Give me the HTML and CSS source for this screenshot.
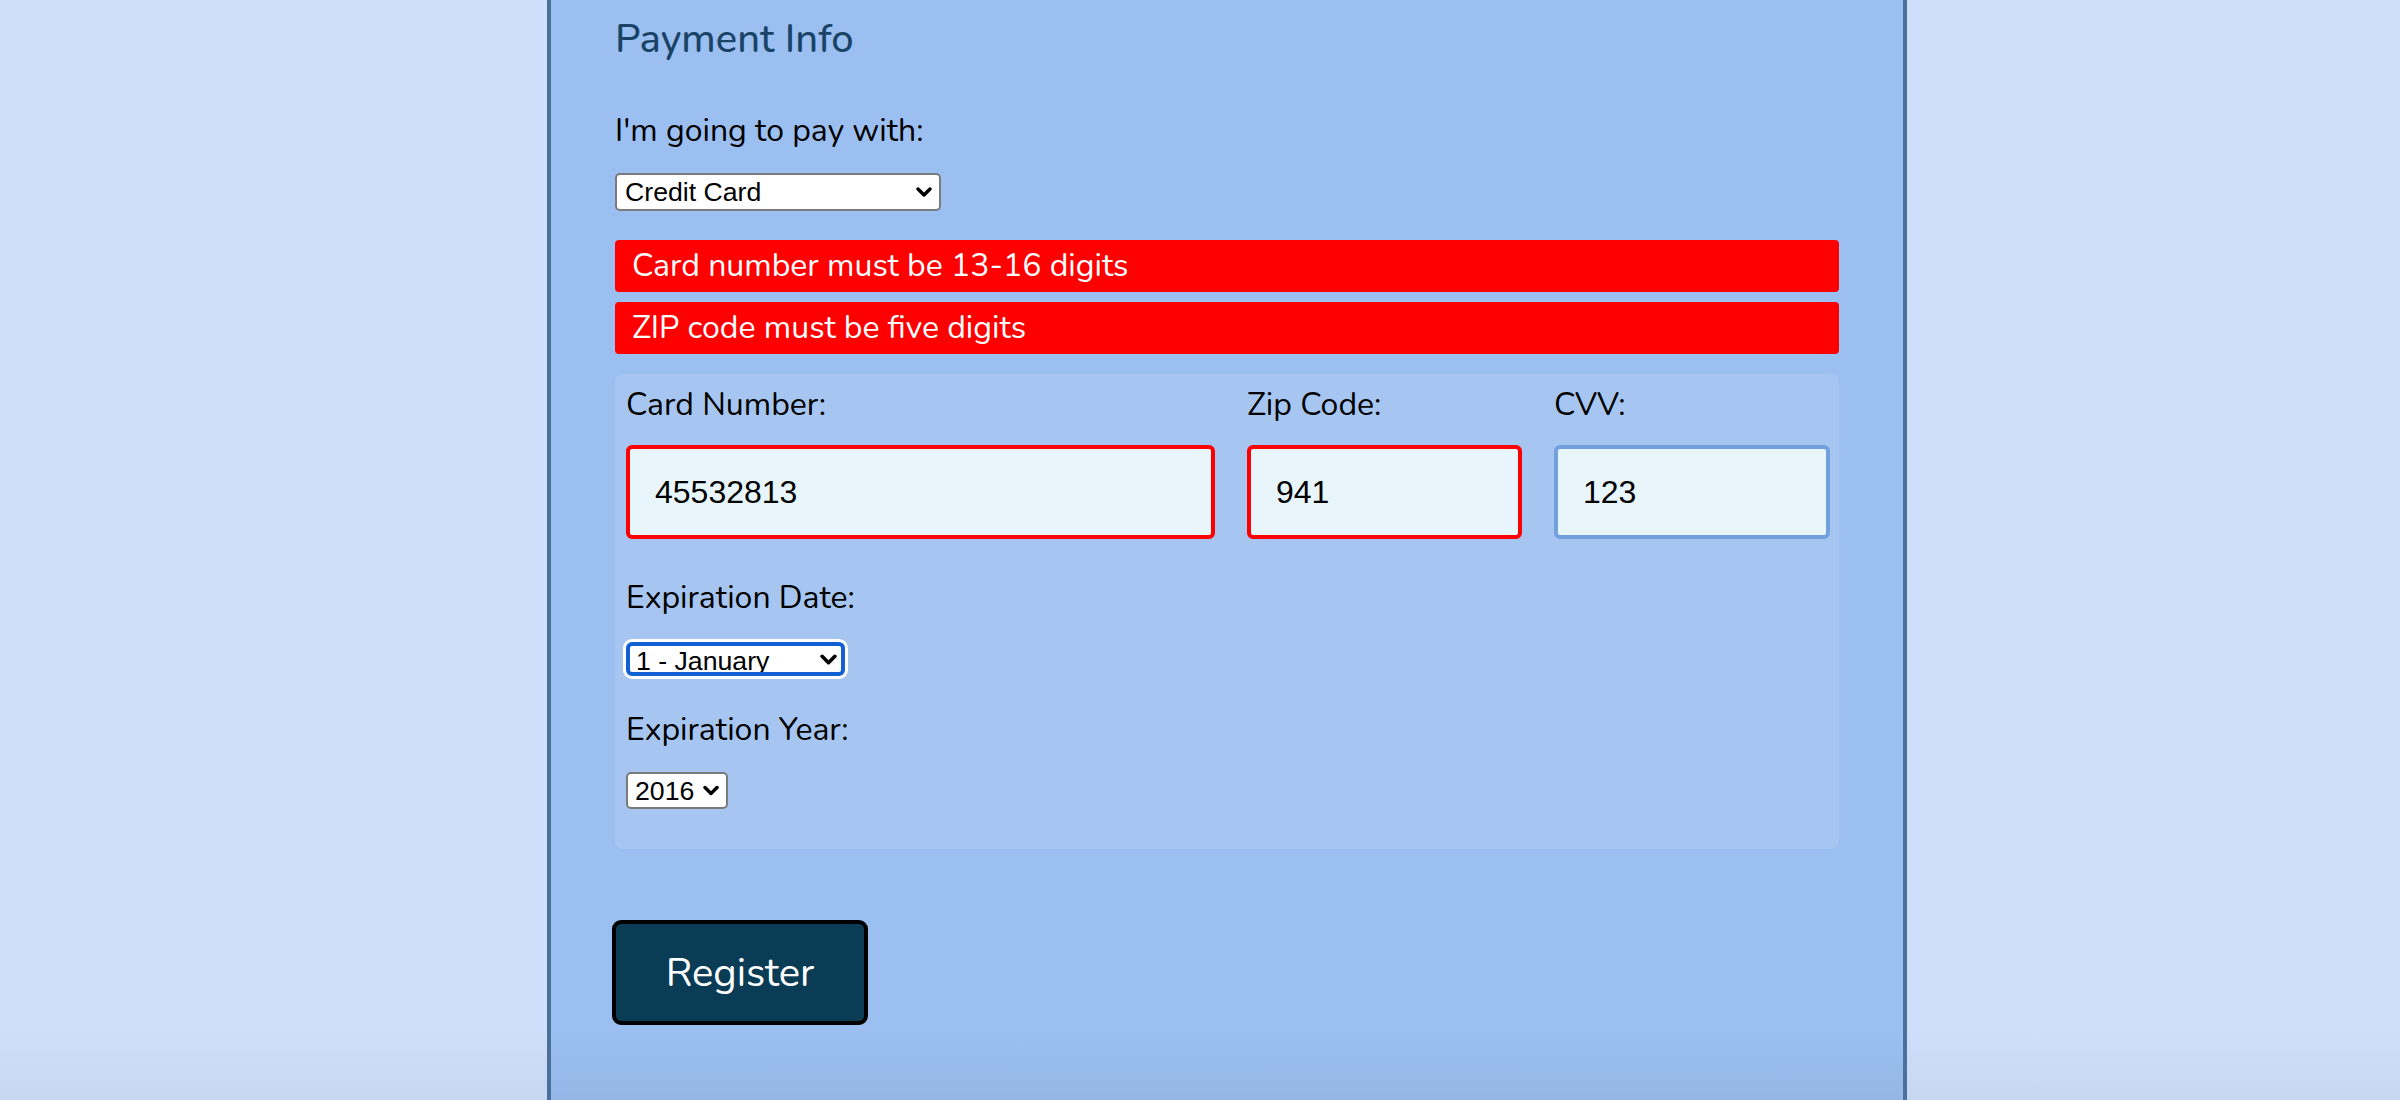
FILE: index.html
```html
<!DOCTYPE html>
<html lang="en">
<head>
<meta charset="utf-8">
<title>Payment Info</title>
<link rel="stylesheet" href="styles.css">
</head>
<body>
<main class="panel">
  <h2 class="title">Payment Info</h2>
  <p class="lead">I'm going to pay with:</p>
  <div class="select select-pay">
    <select>
      <option>Credit Card</option>
      <option>PayPal</option>
      <option>Bitcoin</option>
    </select>
    <svg class="chev" viewBox="0 0 16 10" width="16" height="10"><path d="M2 2 L8 8 L14 2" fill="none" stroke="#000" stroke-width="3.4" stroke-linecap="round" stroke-linejoin="round"/></svg>
  </div>
  <div class="errors">
    <div class="error">Card number must be 13-16 digits</div>
    <div class="error">ZIP code must be five digits</div>
  </div>
  <section class="card">
    <div class="fields">
      <div class="field">
        <label class="label" for="cc">Card Number:</label>
        <input id="cc" class="input invalid" type="text" value="45532813">
      </div>
      <div class="field">
        <label class="label" for="zip">Zip Code:</label>
        <input id="zip" class="input invalid" type="text" value="941">
      </div>
      <div class="field">
        <label class="label" for="cvv">CVV:</label>
        <input id="cvv" class="input valid" type="text" value="123">
      </div>
    </div>
    <label class="label exp-date">Expiration Date:</label>
    <div class="select select-month">
      <select>
        <option>1 - January</option>
        <option>2 - February</option>
      </select>
      <svg class="chev" viewBox="0 0 16 10" width="17" height="11"><path d="M2 2 L8 8 L14 2" fill="none" stroke="#000" stroke-width="3.4" stroke-linecap="round" stroke-linejoin="round"/></svg>
    </div>
    <label class="label exp-year">Expiration Year:</label>
    <div class="select select-year">
      <select>
        <option>2016</option>
        <option>2017</option>
      </select>
      <svg class="chev" viewBox="0 0 16 10" width="16" height="11"><path d="M2 2 L8 8 L14 2" fill="none" stroke="#000" stroke-width="3.4" stroke-linecap="round" stroke-linejoin="round"/></svg>
    </div>
  </section>
  <button class="register" type="button">Register</button>
</main>
</body>
</html>
```
FILE: styles.css
```css
* { box-sizing: border-box; }

html, body {
  margin: 0;
  padding: 0;
}

body {
  height: 1100px;
  overflow: hidden;
  background: linear-gradient(to bottom, #cfdefa 0, #cfdefa 1030px, #c6d7f1 1100px);
  font-family: "Nunito", Lato, "Open Sans", sans-serif;
  color: #000;
}

.panel {
  margin-left: 547px;
  width: 1360px;
  min-height: 1100px;
  border-left: 4px solid #4a7199;
  border-right: 4px solid #4a7199;
  padding: 0 64px;
  background: linear-gradient(to bottom, #9bbff1 0, #9bbff1 1030px, #95b7e8 1100px);
  display: flex;
  flex-direction: column;
  align-items: flex-start;
}

.title {
  margin: 14px 0 0 0;
  font-size: 40px;
  line-height: 50px;
  font-weight: 500;
  color: #1a4466;
}

.lead {
  margin: 48px 0 0 0;
  font-size: 32px;
  line-height: 38px;
}

.select {
  display: flex;
  align-items: center;
  background: #fff;
  border: 2px solid #7a7a7a;
  border-radius: 5px;
}

.select select {
  appearance: none;
  -webkit-appearance: none;
  border: 0;
  background: transparent;
  outline: none;
  flex: 1;
  min-width: 0;
  height: 100%;
  font-family: "Liberation Sans", Arial, sans-serif;
  font-size: 26.67px;
  color: #000;
  padding: 0 0 0 8px;
  margin: 0;
}

.chev { flex: none; }

.select-pay {
  margin-top: 23px;
  width: 326px;
  height: 38px;
}
.select-pay .chev { margin-right: 7px; }

.errors {
  margin-top: 29px;
  align-self: stretch;
  display: flex;
  flex-direction: column;
  gap: 10px;
}

.error {
  height: 52px;
  line-height: 52px;
  padding-left: 17px;
  font-size: 32px;
  color: #fff;
  background: #ff0000;
  border-radius: 4px;
}

.card {
  margin-top: 20px;
  align-self: stretch;
  background: #a6c6f1;
  border-radius: 8px;
  padding: 12px 9px 40px 11px;
  display: flex;
  flex-direction: column;
  align-items: flex-start;
}

.fields {
  display: grid;
  grid-template-columns: 589px 275px 276px;
  column-gap: 32px;
}

.field {
  display: flex;
  flex-direction: column;
}

.label {
  font-size: 32px;
  line-height: 38px;
  color: #000;
}

.input {
  margin-top: 21px;
  width: 100%;
  height: 94px;
  border: 4px solid #6f9fdd;
  border-radius: 6px;
  background: #e8f6fb;
  padding: 0 25px;
  font-family: "Liberation Sans", Arial, sans-serif;
  font-size: 32px;
  color: #000;
  outline: none;
}

.input.invalid { border-color: #ff0000; }
.input.valid { border-color: #72a1de; }

.exp-date { margin-top: 40px; }

.select-month {
  margin-top: 25px;
  width: 219px;
  height: 34px;
  border: 4px solid #1260d2;
  border-radius: 6px;
  box-shadow: 0 0 0 3px #ffffff;
}
.select-month select { padding-left: 6px; }
.select-month .chev { margin-right: 4px; }

.exp-year { margin-top: 35px; }

.select-year {
  margin-top: 23px;
  width: 102px;
  height: 37px;
}
.select-year select { padding-left: 7px; }
.select-year .chev { margin-right: 7px; }

.register {
  margin: 71px 0 0 -3px;
  width: 256px;
  height: 105px;
  border: 4px solid #000;
  border-radius: 9px;
  background: #0b3c55;
  color: #fff;
  font-family: "Nunito", Lato, "Open Sans", sans-serif;
  font-size: 40px;
  padding: 0;
  cursor: pointer;
}
```
